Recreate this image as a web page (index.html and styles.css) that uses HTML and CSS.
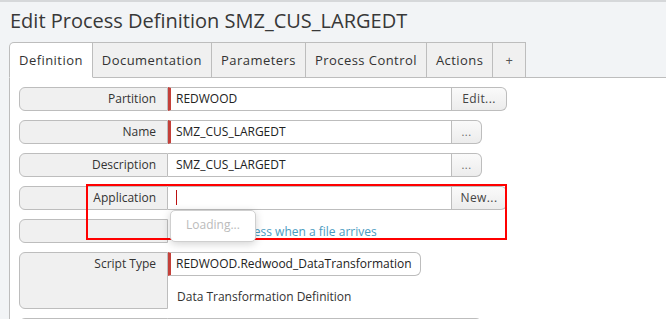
FILE: index.html
```html
<!DOCTYPE html>
<html>
<head>
<meta charset="utf-8">
<link rel="stylesheet" href="styles.css">
</head>
<body>
<div class="page">
  <h1 class="title">Edit Process Definition SMZ_CUS_LARGEDT</h1>
  <div class="tabs">
    <div class="tab active first">Definition</div>
    <div class="tab">Documentation</div>
    <div class="tab">Parameters</div>
    <div class="tab">Process Control</div>
    <div class="tab">Actions</div>
    <div class="tab plus">+</div>
    <div class="tab-fill"></div>
  </div>
  <div class="panel">
    <div class="row">
      <div class="label">Partition</div>
      <div class="input req">REDWOOD</div>
      <div class="btn wide">Edit...</div>
    </div>
    <div class="row">
      <div class="label">Name</div>
      <div class="input req">SMZ_CUS_LARGEDT</div>
      <div class="btn small">...</div>
    </div>
    <div class="row">
      <div class="label">Description</div>
      <div class="input">SMZ_CUS_LARGEDT</div>
      <div class="btn small">...</div>
    </div>
    <div class="row">
      <div class="label">Application</div>
      <div class="input"><span class="caret"></span></div>
      <div class="btn wide">New...</div>
    </div>
    <div class="row">
      <div class="label"></div>
      <div class="link-text">Submit a process when a file arrives</div>
    </div>
    <div class="row tall">
      <div class="label">Script Type</div>
      <div class="stack">
        <div class="input req round">REDWOOD.Redwood_DataTransformation</div>
        <div class="desc">Data Transformation Definition</div>
      </div>
    </div>
    <div class="row">
      <div class="label"></div>
      <div class="input"></div>
      <div class="btn small">...</div>
    </div>
  </div>
  <div class="highlight"></div>
  <div class="loading">Loading...</div>
</div>
</body>
</html>
```
FILE: styles.css
```css
html, body {
  margin: 0;
  padding: 0;
}
body {
  background: #f2f4f6;
  font-family: "Open Sans", "DejaVu Sans", sans-serif;
  color: #333;
  overflow: hidden;
}
.page {
  position: relative;
  width: 666px;
  height: 319px;
  overflow: hidden;
  border-top: 2px solid #d6d8da;
  box-sizing: border-box;
}
.title {
  margin: 0;
  padding: 6px 0 0 10px;
  height: 34px;
  font-size: 20px;
  font-weight: normal;
  line-height: 26px;
  color: #383838;
  letter-spacing: 0;
}
.tabs {
  display: flex;
  margin-left: 9px;
  height: 36px;
}
.tab {
  box-sizing: border-box;
  height: 36px;
  padding: 0 9px;
  border: 1px solid #bdbdbd;
  border-left: none;
  background: #f0f0f0;
  font-size: 13px;
  line-height: 34px;
  letter-spacing: 0.45px;
  color: #333;
}
.tab.first {
  border-left: 1px solid #bdbdbd;
  border-top-left-radius: 5px;
}
.tab.active {
  background: #fff;
  border-bottom-color: #fff;
}
.tab.plus {
  width: 33px;
  text-align: center;
  padding: 0;
  color: #555;
}
.tab-fill {
  flex: 1;
  border-bottom: 1px solid #bdbdbd;
}
.panel {
  margin-left: 9px;
  background: #fff;
  border-left: 1px solid #bdbdbd;
  height: 300px;
  padding: 9px 0 0 9px;
  display: flex;
  flex-direction: column;
  gap: 9px;
}
.row {
  display: flex;
  height: 24px;
  font-size: 12px;
}
.row.tall {
  height: 57px;
}
.label {
  box-sizing: border-box;
  width: 149px;
  height: 100%;
  border: 1px solid #bdbdbd;
  border-radius: 6px 0 0 6px;
  background: #f0f0f0;
  text-align: right;
  padding-right: 11px;
  line-height: 22px;
  color: #333;
}
.input {
  box-sizing: border-box;
  width: 284px;
  height: 24px;
  border: 1px solid #bdbdbd;
  border-left: none;
  padding-left: 8px;
  line-height: 22px;
  color: #222;
  background: #fff;
  position: relative;
}
.input.req {
  border-left: 3px solid #c4403a;
  padding-left: 5px;
}
.input.round {
  width: 253px;
  border-radius: 0 6px 6px 0;
}
.caret {
  display: inline-block;
  width: 1px;
  height: 15px;
  background: #b11;
  vertical-align: middle;
  margin-top: -2px;
}
.btn {
  box-sizing: border-box;
  height: 24px;
  border: 1px solid #bdbdbd;
  border-left: none;
  border-radius: 0 6px 6px 0;
  background: linear-gradient(#fafafa, #ececec);
  text-align: center;
  line-height: 22px;
  color: #444;
  letter-spacing: 0.4px;
}
.btn.wide {
  width: 55px;
  font-size: 12px;
}
.btn.small {
  width: 30px;
  font-size: 11px;
  color: #666;
}
.link-text {
  padding-left: 8px;
  line-height: 24px;
  color: #4a9bbf;
  height: 24px;
  margin-top: 1px;
}
.stack {
  display: flex;
  flex-direction: column;
}
.desc {
  padding-left: 9px;
  line-height: 20px;
  margin-top: 11px;
  color: #333;
}
.highlight {
  position: absolute;
  left: 86px;
  top: 182px;
  width: 421px;
  height: 56px;
  box-sizing: border-box;
  border: 2px solid #f00;
}
.loading {
  position: absolute;
  left: 170px;
  top: 208px;
  width: 86px;
  height: 32px;
  box-sizing: border-box;
  background: #fff;
  border: 1px solid #cfcfcf;
  border-radius: 5px;
  box-shadow: 0 2px 8px rgba(0, 0, 0, 0.18);
  font-size: 12px;
  color: #bbb;
  padding-left: 15px;
  line-height: 28px;
}
```
